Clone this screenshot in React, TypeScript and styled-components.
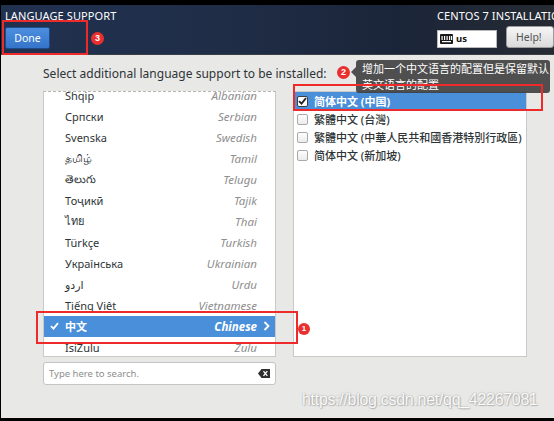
import React from "react";
import styled, { createGlobalStyle } from "styled-components";

const GlobalStyle = createGlobalStyle`
  html, body {
    margin: 0;
    padding: 0;
    background: #000;
  }
  * {
    box-sizing: border-box;
  }
`;

const FONT = `"Noto Sans", "Noto Sans CJK SC", "DejaVu Sans", sans-serif`;

const languages = [
  { native: "Shqip", english: "Albanian" },
  { native: "Српски", english: "Serbian" },
  { native: "Svenska", english: "Swedish" },
  { native: "தமிழ்", english: "Tamil" },
  { native: "తెలుగు", english: "Telugu" },
  { native: "Тоҷикӣ", english: "Tajik" },
  { native: "ไทย", english: "Thai" },
  { native: "Türkçe", english: "Turkish" },
  { native: "Українська", english: "Ukrainian" },
  { native: "اردو", english: "Urdu" },
  { native: "Tiếng Việt", english: "Vietnamese" },
  { native: "中文", english: "Chinese", selected: true },
  { native: "IsiZulu", english: "Zulu" },
];

const locales = [
  { name: "简体中文 (中国)", checked: true },
  { name: "繁體中文 (台灣)", checked: false },
  { name: "繁體中文 (中華人民共和國香港特別行政區)", checked: false },
  { name: "简体中文 (新加坡)", checked: false },
];

const Frame = styled.div`
  position: relative;
  width: 554px;
  height: 421px;
  overflow: hidden;
  background: #000;
  padding: 5px 0 3px 1px;
  font-family: ${FONT};
`;

const Screen = styled.div`
  display: flex;
  flex-direction: column;
  height: 100%;
  background: #e8e8e7;
`;

const Header = styled.div`
  height: 50px;
  flex-shrink: 0;
  display: flex;
  justify-content: space-between;
  background: linear-gradient(90deg, #213150 0%, #1f2d47 40%, #1b2539 72%, #262b33 100%);
  border-bottom: 1px solid #3a3f46;
  color: #fff;
`;

const HeaderLeft = styled.div`
  display: flex;
  flex-direction: column;
  padding: 4px 0 0 4px;
`;

const HeaderRight = styled.div`
  display: flex;
  flex-direction: column;
  width: 117px;
  padding-top: 4px;
  white-space: nowrap;
`;

const HeaderTitle = styled.div`
  font-size: 11px;
  line-height: 14px;
  height: 14px;
  letter-spacing: 0.1px;
`;

const DoneButton = styled.button`
  margin-top: 4px;
  width: 45px;
  height: 22px;
  padding: 0;
  border: 1px solid #1c4c8c;
  border-radius: 2px;
  background: linear-gradient(#4c8ee0, #3574c9);
  color: #fff;
  font-family: ${FONT};
  font-size: 10.5px;
`;

const HeaderTools = styled.div`
  display: flex;
  align-items: center;
  gap: 9px;
  margin-top: 6px;
`;

const LayoutEntry = styled.div`
  display: flex;
  align-items: center;
  gap: 3px;
  width: 75px;
  height: 18px;
  padding-left: 2px;
  background: #fff;
  border: 1px solid #b9b9b9;
  color: #111;
  font-size: 9.5px;
  font-weight: 700;
`;

const HelpButton = styled.button`
  flex-shrink: 0;
  width: 48px;
  height: 22px;
  margin-top: -3px;
  padding: 0 0 0 9px;
  text-align: left;
  border: 1px solid #9c9c9c;
  border-radius: 3px;
  background: linear-gradient(#f6f6f6, #dadada);
  color: #555;
  font-family: ${FONT};
  font-size: 10.5px;
`;

const Body = styled.div`
  flex: 1;
  padding: 10px 0 0 42px;
`;

const Prompt = styled.div`
  font-size: 12px;
  line-height: 18px;
  color: #2e3436;
  letter-spacing: 0.02px;
`;

const Columns = styled.div`
  display: grid;
  grid-template-columns: 233px 234px;
  column-gap: 17px;
  margin-top: 8px;
`;

const LeftColumn = styled.div`
  display: flex;
  flex-direction: column;
  gap: 5px;
`;

const ListBox = styled.div`
  height: 266px;
  overflow: hidden;
  background: #fff;
  border: 1px solid #c9c9c9;
  border-top: 1px dashed #b5b5b5;
`;

const ListInner = styled.div`
  margin-top: -7.5px;
`;

const LangRow = styled.div<{ $selected?: boolean }>`
  display: grid;
  grid-template-columns: 21px 1fr auto 18px;
  align-items: center;
  height: 21px;
  background: ${(p) => (p.$selected ? "#4a8fda" : "transparent")};
  color: ${(p) => (p.$selected ? "#fff" : "#2e3436")};
  font-weight: ${(p) => (p.$selected ? 700 : 400)};
`;

const Native = styled.span`
  font-size: 11px;
`;

const English = styled.span<{ $selected?: boolean }>`
  font-size: 11.5px;
  font-style: italic;
  color: ${(p) => (p.$selected ? "#fff" : "#8e8e8e")};
`;

const RowIcon = styled.span`
  display: flex;
  align-items: center;
  justify-content: center;
`;

const SearchEntry = styled.div`
  display: flex;
  align-items: center;
  justify-content: space-between;
  height: 23px;
  padding: 0 5px 0 5px;
  background: #fff;
  border: 1px solid #c4c4c4;
  border-radius: 3px;
  color: #8d8d8d;
  font-size: 9.5px;
`;

const LocaleBox = styled.div`
  height: 266px;
  background: #fff;
  border: 1px solid #c9c9c9;
`;

const LocaleRow = styled.div<{ $checked?: boolean }>`
  display: flex;
  align-items: center;
  gap: 6px;
  height: 18px;
  padding-left: 3px;
  white-space: nowrap;
  background: ${(p) => (p.$checked ? "#4a8fda" : "transparent")};
  color: ${(p) => (p.$checked ? "#fff" : "#2e3436")};
  font-size: 11px;
  font-weight: ${(p) => (p.$checked ? 700 : 500)};
`;

const Check = styled.span<{ $checked?: boolean }>`
  display: flex;
  align-items: center;
  justify-content: center;
  width: 11px;
  height: 11px;
  flex-shrink: 0;
  border: 1px solid ${(p) => (p.$checked ? "#3d3d3d" : "#a9a9a9")};
  border-radius: 2px;
  background: ${(p) => (p.$checked ? "#fff" : "linear-gradient(#fdfdfd, #ececec)")};
`;

const Marker = styled.div<{ $l: number; $t: number; $w: number; $h: number }>`
  position: absolute;
  left: ${(p) => p.$l}px;
  top: ${(p) => p.$t}px;
  width: ${(p) => p.$w}px;
  height: ${(p) => p.$h}px;
  border: 2px solid #ef2a2a;
  pointer-events: none;
  z-index: 3;
`;

const Badge = styled.div<{ $l: number; $t: number; $size: number }>`
  position: absolute;
  left: ${(p) => p.$l}px;
  top: ${(p) => p.$t}px;
  width: ${(p) => p.$size}px;
  height: ${(p) => p.$size}px;
  border-radius: 50%;
  background: #ea2f2f;
  color: #fff;
  font-family: "Liberation Sans", Arial, sans-serif;
  font-weight: 700;
  font-size: ${(p) => p.$size - 4}px;
  line-height: ${(p) => p.$size}px;
  text-align: center;
  z-index: 3;
`;

const Tooltip = styled.div`
  position: absolute;
  left: 356px;
  top: 60px;
  width: 194px;
  height: 33px;
  padding: 1px 0 0 6px;
  background: rgba(62, 62, 62, 0.9);
  border-radius: 3px;
  color: #fff;
  font-size: 11px;
  line-height: 16px;
  z-index: 2;
  &::before {
    content: "";
    position: absolute;
    left: -5px;
    top: 7px;
    border-style: solid;
    border-width: 5px 5px 5px 0;
    border-color: transparent rgba(62, 62, 62, 0.9) transparent transparent;
  }
`;

const Watermark = styled.div`
  position: absolute;
  left: 302px;
  top: 391px;
  font-family: "Liberation Sans", Arial, sans-serif;
  font-size: 16px;
  color: rgba(255, 255, 255, 0.95);
  text-shadow: 0 0 2px rgba(0, 0, 0, 0.35), 1px 1px 1px rgba(0, 0, 0, 0.15);
  letter-spacing: -0.3px;
  z-index: 2;
`;

const KeyboardIcon = () => (
  <svg width="13" height="10" viewBox="0 0 13 10">
    <rect x="0" y="0" width="13" height="10" rx="1" fill="#1a1a1a" />
    {[1.5, 4, 6.5, 9, 11].map((x) => (
      <rect key={"a" + x} x={x} y="2" width="1.2" height="4" fill="#fff" />
    ))}
    <rect x="2" y="7" width="9" height="1.2" fill="#fff" />
  </svg>
);

const ClearIcon = () => (
  <svg width="12" height="9" viewBox="0 0 12 9">
    <path d="M3.5 0 H12 V9 H3.5 L0 4.5 Z" fill="#2e2e2e" />
    <path d="M5.5 2.2 L9.3 6.8 M9.3 2.2 L5.5 6.8" stroke="#fff" strokeWidth="1.3" />
  </svg>
);

const TickIcon = ({ color }: { color: string }) => (
  <svg width="9" height="8" viewBox="0 0 9 8">
    <path d="M1 4.2 L3.5 6.6 L8 1.2" fill="none" stroke={color} strokeWidth="1.8" />
  </svg>
);

const ChevronIcon = () => (
  <svg width="7" height="10" viewBox="0 0 7 10">
    <path d="M1.5 1 L5.5 5 L1.5 9" fill="none" stroke="#fff" strokeWidth="1.8" />
  </svg>
);

export default function App() {
  return (
    <>
      <GlobalStyle />
      <Frame>
        <Screen>
          <Header>
            <HeaderLeft>
              <HeaderTitle>LANGUAGE SUPPORT</HeaderTitle>
              <DoneButton>Done</DoneButton>
            </HeaderLeft>
            <HeaderRight>
              <HeaderTitle>CENTOS 7 INSTALLATION</HeaderTitle>
              <HeaderTools>
                <LayoutEntry>
                  <KeyboardIcon />
                  us
                </LayoutEntry>
                <HelpButton>Help!</HelpButton>
              </HeaderTools>
            </HeaderRight>
          </Header>
          <Body>
            <Prompt>Select additional language support to be installed:</Prompt>
            <Columns>
              <LeftColumn>
                <ListBox>
                  <ListInner>
                    {languages.map((lang) => (
                      <LangRow key={lang.english} $selected={lang.selected}>
                        <RowIcon>{lang.selected && <TickIcon color="#fff" />}</RowIcon>
                        <Native>{lang.native}</Native>
                        <English $selected={lang.selected}>{lang.english}</English>
                        <RowIcon>{lang.selected && <ChevronIcon />}</RowIcon>
                      </LangRow>
                    ))}
                  </ListInner>
                </ListBox>
                <SearchEntry>
                  Type here to search.
                  <ClearIcon />
                </SearchEntry>
              </LeftColumn>
              <LocaleBox>
                {locales.map((loc) => (
                  <LocaleRow key={loc.name} $checked={loc.checked}>
                    <Check $checked={loc.checked}>
                      {loc.checked && <TickIcon color="#222" />}
                    </Check>
                    {loc.name}
                  </LocaleRow>
                ))}
              </LocaleBox>
            </Columns>
          </Body>
        </Screen>

        <Tooltip>
          增加一个中文语言的配置但是保留默认
          <br />
          英文语言的配置
        </Tooltip>
        <Marker $l={2} $t={20} $w={86} $h={35} />
        <Badge $l={91} $t={32} $size={13}>3</Badge>
        <Marker $l={293} $t={84} $w={250} $h={27} />
        <Badge $l={337} $t={66} $size={13}>2</Badge>
        <Marker $l={36} $t={311} $w={262} $h={33} />
        <Badge $l={298} $t={323} $size={12}>1</Badge>
        <Watermark>https://blog.csdn.net/qq_42267081</Watermark>
      </Frame>
    </>
  );
}
